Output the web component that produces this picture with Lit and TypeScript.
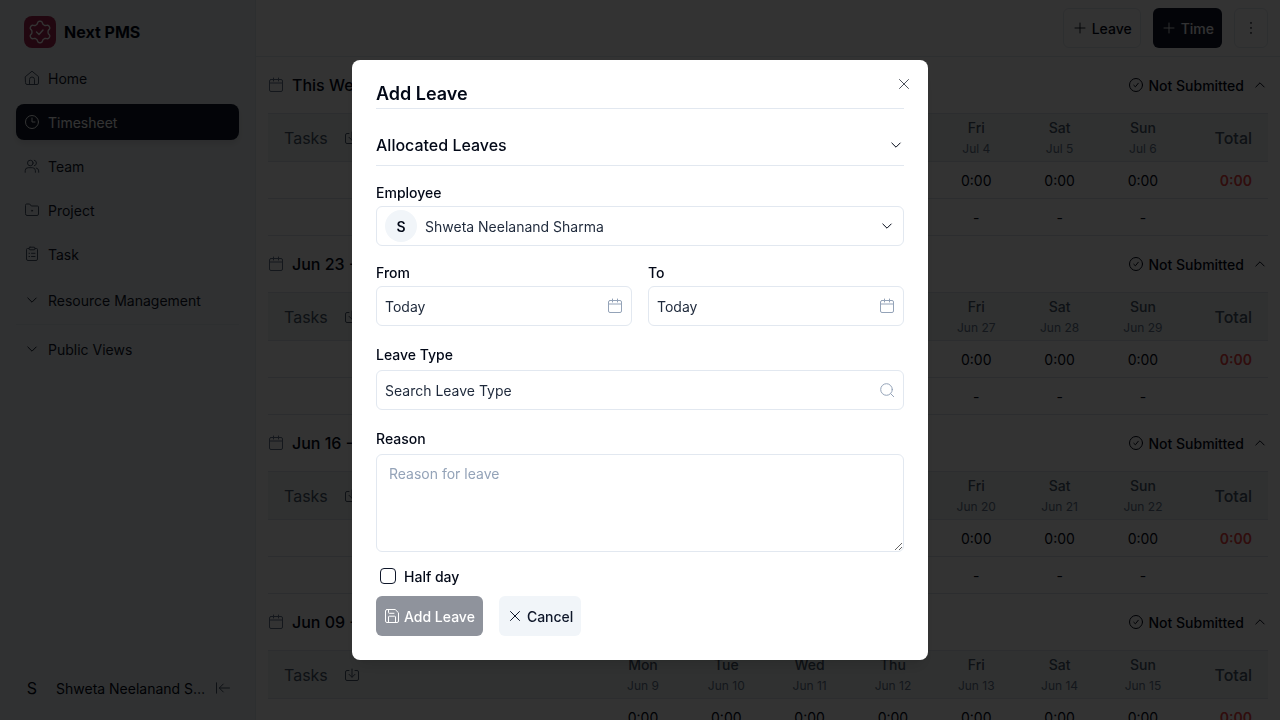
import { LitElement, html, css, svg } from "lit";
import { customElement, state } from "lit/decorators.js";
import { classMap } from "lit/directives/class-map.js";

const glyphs = {
  home: svg`<path d="M1.5 6.6 8 1.2l6.500 5.400v6.400a1.500 1.500 0 0 1-1.500 1.500H3a1.500 1.500 0 0 1-1.500-1.500z"/><path d="M5.500 14.500V9.500A2.500 2.500 0 0 1 8 7a2.500 2.500 0 0 1 2.500 2.500v5"/>`,
  clock: svg`<circle cx="8" cy="8" r="6.500"/><path d="M8 4v4h3"/>`,
  team: svg`<circle cx="6.300" cy="5" r="2.800"/><path d="M1.200 14.300v-1.600a3 3 0 0 1 3-3h4.200a3 3 0 0 1 3 3v1.600M10.300 2.200a2.900 2.900 0 0 1 0 5.600M12.300 10a3 3 0 0 1 2.400 2.900v1.400"/>`,
  project: svg`<path d="M1.500 3a1 1 0 0 1 1-1h3.200l1.600 2h6.200a1 1 0 0 1 1 1v7a1.500 1.500 0 0 1-1.500 1.500H3A1.500 1.500 0 0 1 1.500 12z"/><circle cx="8" cy="8.700" r=".6"/>`,
  task: svg`<path d="M5 2.500H3.500a1 1 0 0 0-1 1V13A1.500 1.500 0 0 0 4 14.500h8a1.500 1.500 0 0 0 1.500-1.500V3.500a1 1 0 0 0-1-1H11"/><rect x="5" y="1.200" width="6" height="2.600" rx="1"/><path d="M7.500 7.300H11M7.500 10.500H11M5 7.300h.6M5 10.500h.6"/>`,
  down: svg`<path d="m3.800 6 4.200 4.200L12.200 6"/>`,
  up: svg`<path d="m3.800 10 4.200-4.200 4.200 4.200"/>`,
  calendar: svg`<rect x="1.500" y="2.500" width="13" height="12" rx="1.500"/><path d="M1.500 6h13M5.500 1v3M10.500 1v3"/>`,
  check: svg`<circle cx="8" cy="8" r="6.500"/><path d="m5.800 8.300 1.600 1.500 2.900-3.600"/>`,
  download: svg`<path d="M5 3.500H3A1.500 1.500 0 0 0 1.500 5v7A1.500 1.500 0 0 0 3 13.500h10a1.500 1.500 0 0 0 1.500-1.500V5A1.500 1.500 0 0 0 13 3.500h-2M8 2v8M5 7.300l3 3 3-3"/>`,
  plus: svg`<path d="M8 3v10M3 8h10" stroke-width=".9"/>`,
  dots: svg`<path d="M8 2.900v.2M8 7.900v.2M8 12.900v.2" stroke-width="1.600"/>`,
  close: svg`<path d="m3.500 3.500 9 9M12.500 3.500l-9 9"/>`,
  search: svg`<circle cx="7.500" cy="7.500" r="5.800"/><path d="m11.700 11.700 3 3"/>`,
  save: svg`<path d="M3 1.500h8.200l3.300 3.300V13a1.500 1.500 0 0 1-1.500 1.500H3A1.500 1.500 0 0 1 1.500 13V3A1.500 1.500 0 0 1 3 1.500z"/><path d="M4.500 14.500V9A.8.8 0 0 1 5.300 8.200h5.400a.8.8 0 0 1 .8.8v5.500M4.500 1.500V4.500a.8.8 0 0 0 .8.800h4.700"/>`,
  collapse: svg`<path d="M1.500 2.800v10.400M14.500 8H4.500M8.300 4 4.300 8l4 4"/>`,
};

const icon = (name: keyof typeof glyphs) => html`<svg
  class="icon" viewBox="0 0 16 16" width="16" height="16" fill="none"
  stroke="currentColor" stroke-linecap="round" stroke-linejoin="round" aria-hidden="true"
>${glyphs[name]}</svg>`;

// Six-toothed gear outline with soft shoulders, one tooth pointing up.
const gear = Array.from({ length: 96 }, (_, i) => {
  const angle = (i / 96) * Math.PI * 2;
  const radius = 9.4 + 1.4 * Math.tanh(1.8 * Math.cos(6 * angle));
  return `${(12 + radius * Math.sin(angle)).toFixed(2)},${(12 - radius * Math.cos(angle)).toFixed(2)}`;
}).join(" ");

const DAYS = ["Mon", "Tue", "Wed", "Thu", "Fri", "Sat", "Sun"];

const WEEKS = [
  { title: "This Week", dates: ["Jun 30", "Jul 1", "Jul 2", "Jul 3", "Jul 4", "Jul 5", "Jul 6"] },
  { title: "Jun 23 - Jun 29", dates: [23, 24, 25, 26, 27, 28, 29].map((d) => `Jun ${d}`) },
  { title: "Jun 16 - Jun 22", dates: [16, 17, 18, 19, 20, 21, 22].map((d) => `Jun ${d}`) },
  { title: "Jun 09 - Jun 15", dates: [9, 10, 11, 12, 13, 14, 15].map((d) => `Jun ${d}`) },
];

const base = css`
  :host, *, *::before, *::after { box-sizing: border-box; }
  :host {
    font-family: Inter, "Liberation Sans", sans-serif;
    font-size: 14px;
    line-height: 21px;
    color: #020817;
  }
  h1, h2, h3, p, ul { margin: 0; padding: 0; font: inherit; }
  button, input, select, textarea { font: inherit; color: inherit; margin: 0; }
  button { border: 0; background: none; padding: 0; display: flex; align-items: center; }
  a { color: inherit; text-decoration: none; }
  .icon { display: block; flex: none; }
`;

@customElement("pms-sidebar")
class PmsSidebar extends LitElement {
  static styles = [base, css`
    :host {
      display: flex; flex-direction: column; width: 256px; flex: none;
      padding: 16px; background: #f1f5f9; border-right: 1px solid #e2e8f0;
    }
    .brand { display: flex; align-items: center; gap: 8px; padding: 0 8px; margin-bottom: 12px; }
    .logo { width: 32px; height: 32px; border-radius: 8px; background: #a5274f; color: #fff; display: grid; place-items: center; }
    .name { font-size: 16px; line-height: 24px; font-weight: 700; }
    .nav { display: flex; flex-direction: column; gap: 8px; }
    .link { display: flex; align-items: center; gap: 8px; height: 36px; padding: 0 8px; border-radius: 8px; color: #0f172a; }
    .link .icon { color: #475569; }
    .active { background: #0f172a; color: #fff; box-shadow: 0 4px 6px rgb(0 0 0 / 10%); }
    .link.active .icon { color: #fff; }
    .groups { display: flex; flex-direction: column; gap: 4px; margin-top: 8px; }
    .group { gap: 8px; height: 40px; padding: 0 8px; color: #0f172a; }
    .line { height: 1px; background: #e2e8f0; }
    .user { display: flex; align-items: center; gap: 8px; height: 32px; margin-top: auto; }
    .avatar { width: 32px; text-align: center; font-size: 16px; }
    .who { flex: 1; min-width: 0; overflow: hidden; text-overflow: ellipsis; white-space: nowrap; }
    .fold { padding-right: 8px; color: #475569; }
  `];

  render() {
    const links = [["home", "Home"], ["clock", "Timesheet"], ["team", "Team"], ["project", "Project"], ["task", "Task"]] as const;
    return html`
      <div class="brand">
        <span class="logo"><svg width="24" height="24" viewBox="0 0 24 24" fill="none" stroke="currentColor" stroke-width="1.400" stroke-linejoin="round" stroke-linecap="round" aria-hidden="true">
          <polygon points=${gear}/>
          <path d="m8.500 12 2.500 2.500 4-4.500"/></svg></span>
        <h1 class="name">Next PMS</h1>
      </div>
      <nav class="nav">
        ${links.map(([i, label]) => html`<a href="#${i}" class=${classMap({ link: true, active: i === "clock" })}>${icon(i)}${label}</a>`)}
      </nav>
      <div class="groups">
        <button class="group">${icon("down")}Resource Management</button>
        <div class="line"></div>
        <button class="group">${icon("down")}Public Views</button>
      </div>
      <div class="user">
        <span class="avatar">S</span>
        <span class="who">Shweta Neelanand Sharma</span>
        <button class="fold" aria-label="Collapse sidebar">${icon("collapse")}</button>
      </div>`;
  }
}

@customElement("pms-timesheet")
class PmsTimesheet extends LitElement {
  static styles = [base, css`
    :host { display: flex; flex-direction: column; flex: 1; min-width: 0; overflow: hidden; background: #fff; }
    .bar { display: flex; justify-content: flex-end; gap: 12px; padding: 8px 12px; border-bottom: 1px solid #e2e8f0; }
    .btn { height: 40px; padding: 0 8px; gap: 4px; border-radius: 6px; font-weight: 500; }
    .outline { border: 1px solid #e2e8f0; }
    .solid { background: #0f172a; color: #f8fafc; }
    .weeks { padding: 0 12px; }
    .head { display: flex; align-items: center; gap: 8px; height: 56px; }
    .head > .icon { color: #64748b; }
    .title { flex: 1; font-size: 16px; line-height: 24px; font-weight: 500; }
    .status { gap: 4px; font-weight: 500; }
    table { width: 100%; table-layout: fixed; border-collapse: separate; border-spacing: 0; }
    th, td { padding: 0; border-bottom: 1px solid #dbe2ea; text-align: center; font-weight: 400; }
    th { height: 49px; background: #eff5f4; color: #475569; border-top: 1px solid #dbe2ea; }
    td { height: 37px; }
    .first { width: 33.33%; }
    .tasks { display: flex; align-items: center; gap: 16px; padding: 0 16px; font-size: 16px; line-height: 24px; color: #475569; }
    .day { display: block; font-weight: 500; }
    .date { display: block; font-size: 12px; color: #64748b; }
    .total { text-align: right; padding-right: 16px; font-weight: 500; }
    th.total { font-size: 16px; line-height: 24px; }
    .red { color: #ef4444; font-weight: 600; }
  `];

  render() {
    return html`
      <header class="bar">
        <button class="btn outline">${icon("plus")}Leave</button>
        <button class="btn solid">${icon("plus")}Time</button>
        <button class="btn outline" aria-label="More">${icon("dots")}</button>
      </header>
      <main class="weeks">
        ${WEEKS.map((w) => html`
          <section>
            <div class="head">
              ${icon("calendar")}
              <h2 class="title">${w.title}</h2>
              <button class="status">${icon("check")}Not Submitted</button>
              <button aria-label="Collapse week">${icon("up")}</button>
            </div>
            <table>
              <thead><tr>
                <th class="first"><span class="tasks">Tasks ${icon("download")}</span></th>
                ${DAYS.map((d, i) => html`<th><span class="day">${d}</span><span class="date">${w.dates[i]}</span></th>`)}
                <th class="total">Total</th>
              </tr></thead>
              <tbody>
                <tr><td></td>${DAYS.map(() => html`<td>0:00</td>`)}<td class="total red">0:00</td></tr>
                <tr><td></td>${DAYS.map(() => html`<td>-</td>`)}<td></td></tr>
              </tbody>
            </table>
          </section>`)}
      </main>`;
  }
}

@customElement("leave-dialog")
class LeaveDialog extends LitElement {
  @state() private halfDay = false;

  static styles = [base, css`
    :host { position: fixed; inset: 0; display: flex; align-items: center; justify-content: center; background: rgb(0 0 0 / 80%); }
    .dialog {
      position: relative; display: flex; flex-direction: column; gap: 16px;
      width: 100%; max-width: 576px; padding: 24px; border-radius: 8px; background: #fff;
      box-shadow: 0 10px 15px -3px rgb(0 0 0 / 10%), 0 4px 6px -4px rgb(0 0 0 / 10%);
    }
    .close { position: absolute; top: 16px; right: 16px; opacity: .7; }
    .title { font-size: 18px; line-height: 20px; font-weight: 600; padding-bottom: 4px; border-bottom: 1px solid #e2e8f0; }
    .fold { justify-content: space-between; height: 41px; font-size: 16px; font-weight: 500; border-bottom: 1px solid #e2e8f0; }
    .pair { display: grid; grid-template-columns: 1fr 1fr; gap: 16px; }
    .field { display: flex; flex-direction: column; gap: 2px; }
    .label { font-weight: 500; line-height: 22px; }
    .tall { line-height: 26px; }
    .box { display: flex; align-items: center; gap: 8px; height: 40px; padding: 0 8px; border: 1px solid #e2e8f0; border-radius: 6px; color: #1e293b; }
    .box > .icon { color: #94a3b8; }
    .box > .dark { color: #020817; }
    .avatar { display: grid; place-items: center; width: 32px; height: 32px; border-radius: 50%; background: #f1f5f9; color: #020817; font-weight: 600; }
    .control { flex: 1; min-width: 0; width: 100%; height: 36px; padding: 0; border: 0; outline: 0; background: none; appearance: none; }
    .control::placeholder { color: #1e293b; opacity: 1; }
    .reason { display: block; height: 98px; padding: 8px 12px; border: 1px solid #e2e8f0; border-radius: 6px; outline: 0; background: #fff; resize: vertical; }
    .reason::placeholder { color: #94a3b8; opacity: 1; }
    .foot { display: flex; flex-direction: column; gap: 12px; }
    .tick { display: flex; align-items: center; gap: 8px; height: 16px; padding: 0 4px; font-weight: 500; }
    .tick input { appearance: none; width: 16px; height: 16px; border: 1px solid #0f172a; border-radius: 4px; background: #fff; }
    .tick input:checked { background: #0f172a; }
    .actions { display: flex; gap: 16px; }
    .btn { height: 40px; padding: 0 8px; gap: 4px; border-radius: 6px; font-weight: 500; }
    .primary { background: #8f939c; color: #fff; }
    .muted { background: #f1f5f9; color: #0f172a; }
  `];

  render() {
    return html`
      <form class="dialog" role="dialog" aria-modal="true" aria-labelledby="title" @submit=${(e: Event) => e.preventDefault()}>
        <button type="button" class="close" aria-label="Close">${icon("close")}</button>
        <h2 class="title" id="title">Add Leave</h2>
        <button type="button" class="fold" aria-expanded="false">Allocated Leaves ${icon("down")}</button>
        <div class="field">
          <label class="label" for="employee">Employee</label>
          <div class="box">
            <span class="avatar">S</span>
            <select class="control" id="employee"><option>Shweta Neelanand Sharma</option></select>
            <span class="dark">${icon("down")}</span>
          </div>
        </div>
        <div class="pair">
          ${["From", "To"].map((name) => html`
            <div class="field">
              <label class="label" for=${name}>${name}</label>
              <div class="box"><input class="control" id=${name} type="text" value="Today">${icon("calendar")}</div>
            </div>`)}
        </div>
        <div class="field">
          <label class="label tall" for="type">Leave Type</label>
          <div class="box"><input class="control" id="type" type="text" placeholder="Search Leave Type">${icon("search")}</div>
        </div>
        <div class="field">
          <label class="label tall" for="reason">Reason</label>
          <textarea class="reason" id="reason" placeholder="Reason for leave"></textarea>
        </div>
        <div class="foot">
          <label class="tick"><input type="checkbox" .checked=${this.halfDay} @change=${() => (this.halfDay = !this.halfDay)}>Half day</label>
          <div class="actions">
            <button class="btn primary" type="submit" disabled>${icon("save")}Add Leave</button>
            <button class="btn muted" type="button">${icon("close")}Cancel</button>
          </div>
        </div>
      </form>`;
  }
}

@customElement("app-root")
class AppRoot extends LitElement {
  static styles = css`
    :host { display: flex; height: 100vh; overflow: hidden; }
  `;

  render() {
    return html`<pms-sidebar></pms-sidebar><pms-timesheet></pms-timesheet><leave-dialog></leave-dialog>`;
  }
}
